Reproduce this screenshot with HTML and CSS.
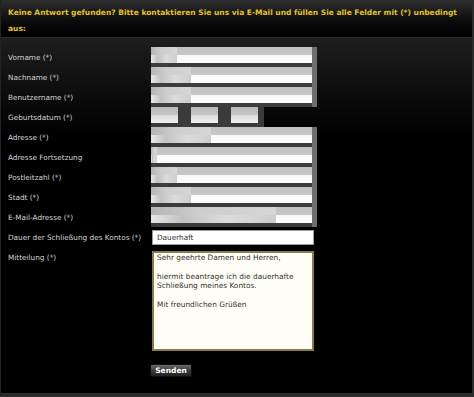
FILE: index.html
```html
<!DOCTYPE html>
<html lang="de">
<head>
  <meta charset="UTF-8">
  <title>Kontakt</title>
  <link rel="stylesheet" href="styles.css">
</head>
<body>
  <div class="page">
    <div class="intro">
      <p>Keine Antwort gefunden? Bitte kontaktieren Sie uns via E-Mail und füllen Sie alle Felder mit (*) unbedingt aus:</p>
    </div>

    <form class="form">
      <div class="row">
        <label>Vorname (*)</label>
        <div class="blur"><span class="smear s2"></span></div>
      </div>
      <div class="row">
        <label>Nachname (*)</label>
        <div class="blur"><span class="smear s3"></span></div>
      </div>
      <div class="row">
        <label>Benutzername (*)</label>
        <div class="blur"><span class="smear s3"></span></div>
      </div>
      <div class="row">
        <label>Geburtsdatum (*)</label>
        <div class="dates">
          <span class="date"></span>
          <span class="date"></span>
          <span class="date"></span>
        </div>
      </div>
      <div class="row">
        <label>Adresse (*)</label>
        <div class="blur"><span class="smear s4"></span></div>
      </div>
      <div class="row">
        <label>Adresse Fortsetzung</label>
        <div class="blur"><span class="smear s1"></span></div>
      </div>
      <div class="row">
        <label>Postleitzahl (*)</label>
        <div class="blur"><span class="smear s2"></span></div>
      </div>
      <div class="row">
        <label>Stadt (*)</label>
        <div class="blur"><span class="smear s3"></span></div>
      </div>
      <div class="row">
        <label>E-Mail-Adresse (*)</label>
        <div class="blur"><span class="smear s5"></span></div>
      </div>
      <div class="row">
        <label>Dauer der Schließung des Kontos (*)</label>
        <div class="text-input">Dauerhaft</div>
      </div>
      <div class="row row-top">
        <label>Mitteilung (*)</label>
        <div class="textarea">
          <p>Sehr geehrte Damen und Herren,</p>
          <p>hiermit beantrage ich die dauerhafte Schließung meines Kontos.</p>
          <p>Mit freundlichen Grüßen</p>
        </div>
      </div>
      <div class="row row-btn">
        <button type="button" class="btn">Senden</button>
      </div>
    </form>
  </div>
</body>
</html>
```

FILE: styles.css
```css
*, *::before, *::after {
  box-sizing: border-box;
}

html, body {
  margin: 0;
  background: #000;
  height: 100%;
}

body {
  font-family: "DejaVu Sans", Verdana, sans-serif;
  font-size: 7.3px;
  color: #d4d4d4;
}

.page {
  width: 474px;
  height: 397px;
  border-left: 1px solid #222;
  border-right: 2px solid #2c2c2c;
  border-bottom: 4px solid #2a2a2a;
  background: linear-gradient(#1e1e1e 38px, #0a0a0a 100px, #000 140px);
}

.intro {
  height: 38px;
  padding: 5px 8px 0 7px;
  background: linear-gradient(#2e2e2e, #0a0a0a 22px, #000);
  border-bottom: 1px solid #2a2a2a;
}

.intro p {
  margin: 0;
  color: #e3c02e;
  font-weight: bold;
  font-size: 7.5px;
  line-height: 16px;
}

.form {
  padding: 9px 0 0 7px;
}

.row {
  display: flex;
  align-items: center;
  height: 20px;
}

.row label {
  width: 143px;
  flex-shrink: 0;
  white-space: nowrap;
}

/* verpixelte Felder */
.blur {
  position: relative;
  width: 166px;
  height: 20px;
  background: linear-gradient(#c2c2c2 0, #c8c8c8 8px, #f9f9f9 8px, #fdfdfd 16px, #3c3c3c 16px);
  border-right: 5px solid #6e6e6e;
}

.smear {
  position: absolute;
  left: 0;
  top: 0;
  height: 16px;
  background: linear-gradient(90deg, #b4b4b4, #cfcfcf 40%, #d8d8d8);
  opacity: 0.9;
}

.smear::after {
  content: "";
  position: absolute;
  left: 0;
  right: 0;
  bottom: 0;
  height: 8px;
  background: linear-gradient(90deg, #e6e6e6, #bdbdbd 25%, #d9d9d9 60%, #c9c9c9);
}

.s1 { width: 6px; }
.s2 { width: 26px; }
.s3 { width: 40px; }
.s4 { width: 60px; }
.s5 { width: 125px; }

.dates {
  display: flex;
  height: 20px;
  background: #3a3a3a;
  width: 113px;
}

.date {
  width: 27px;
  height: 16px;
  background: linear-gradient(#b8b8b8 0, #c6c6c6 8px, #dcdcdc 8px, #f0f0f0 16px);
  margin-right: 13px;
}

.date:last-child {
  margin-right: 0;
}

.text-input {
  width: 162px;
  height: 15px;
  margin-left: 1px;
  background: #fff;
  border: 1px solid #9a9a9a;
  color: #333;
  padding: 0 4px;
  line-height: 13px;
}

.row-top {
  height: auto;
  align-items: flex-start;
  padding-top: 4px;
}

.row-top label {
  padding-top: 2px;
}

.textarea {
  width: 162px;
  height: 100px;
  margin-left: 1px;
  background: #fffef6;
  border: 2px solid #8a7a4c;
  color: #333;
  font-size: 7.4px;
  padding: 0 3px;
}

.textarea p {
  margin: 0 0 9px 0;
  line-height: 9.5px;
}

.row-btn {
  padding-left: 142px;
  margin-top: 12px;
  height: 14px;
}

.btn {
  width: 42px;
  height: 13px;
  padding: 0;
  border: 1px solid #111;
  border-radius: 2px;
  background: linear-gradient(#6a6a6a, #3c3c3c 50%, #222);
  color: #fff;
  font-family: "DejaVu Sans", Verdana, sans-serif;
  font-weight: bold;
  font-size: 7.5px;
  line-height: 11px;
}
```
